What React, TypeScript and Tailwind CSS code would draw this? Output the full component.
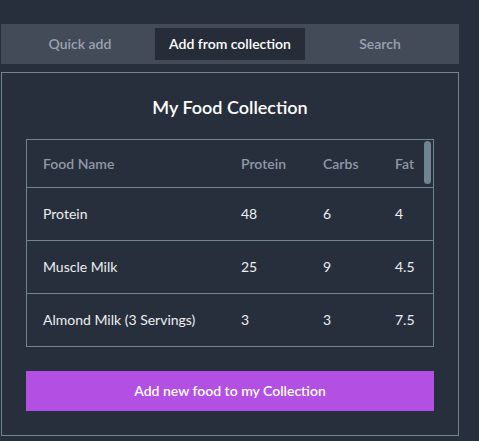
import React, { useState } from 'react';

interface Food {
  name: string;
  protein: string;
  carbs: string;
  fat: string;
}

const foods: Food[] = [
  { name: 'Protein', protein: '48', carbs: '6', fat: '4' },
  { name: 'Muscle Milk', protein: '25', carbs: '9', fat: '4.5' },
  { name: 'Almond Milk (3 Servings)', protein: '3', carbs: '3', fat: '7.5' },
];

const tabs = ['Quick add', 'Add from collection', 'Search'];

const App: React.FC = () => {
  const [activeTab, setActiveTab] = useState(1);

  return (
    <div className="min-h-screen bg-[#282f3c] pt-6 font-['Lato','Noto_Sans',sans-serif]">
      <div className="ml-px w-[458px]">
        {/* Tabs */}
        <div className="grid grid-cols-3 bg-[#434a58] p-1">
          {tabs.map((tab, index) => (
            <button
              key={tab}
              onClick={() => setActiveTab(index)}
              className={`h-8 text-sm font-semibold ${
                activeTab === index ? 'bg-[#262d39] text-white' : 'text-[#9aa3b0]'
              }`}
            >
              {tab}
            </button>
          ))}
        </div>

        {/* Collection panel */}
        <div className="mt-2 border border-[#6f8591] px-6 pb-6 pt-5">
          <h2 className="mb-[18px] text-center text-lg font-semibold leading-7 text-white">My Food Collection</h2>

          <div className="relative border border-[#6f8591]">
            <div className="grid h-12 grid-cols-[198px_82px_72px_1fr] items-center border-b border-[#6f8591] text-sm font-semibold text-[#8f99a6]">
              <div className="px-4">Food Name</div>
              <div className="px-4">Protein</div>
              <div className="px-4">Carbs</div>
              <div className="px-4">Fat</div>
            </div>
            {foods.map((food, index) => (
              <div
                key={food.name}
                className={`grid grid-cols-[198px_82px_72px_1fr] items-center text-sm text-[#eceef1] ${
                  index < foods.length - 1 ? 'h-[53px] border-b border-[#6f8591]' : 'h-[52px]'
                }`}
              >
                <div className="px-4">{food.name}</div>
                <div className="px-4">{food.protein}</div>
                <div className="px-4">{food.carbs}</div>
                <div className="px-4">{food.fat}</div>
              </div>
            ))}
            {/* scroll thumb */}
            <div className="absolute right-[2px] top-[1px] h-[43px] w-[7px] rounded-full bg-[#6f8591]"></div>
          </div>

          <button className="mt-6 h-10 w-full bg-[#b44fe3] text-sm font-semibold text-white">
            Add new food to my Collection
          </button>
        </div>
      </div>
    </div>
  );
};

export default App;
